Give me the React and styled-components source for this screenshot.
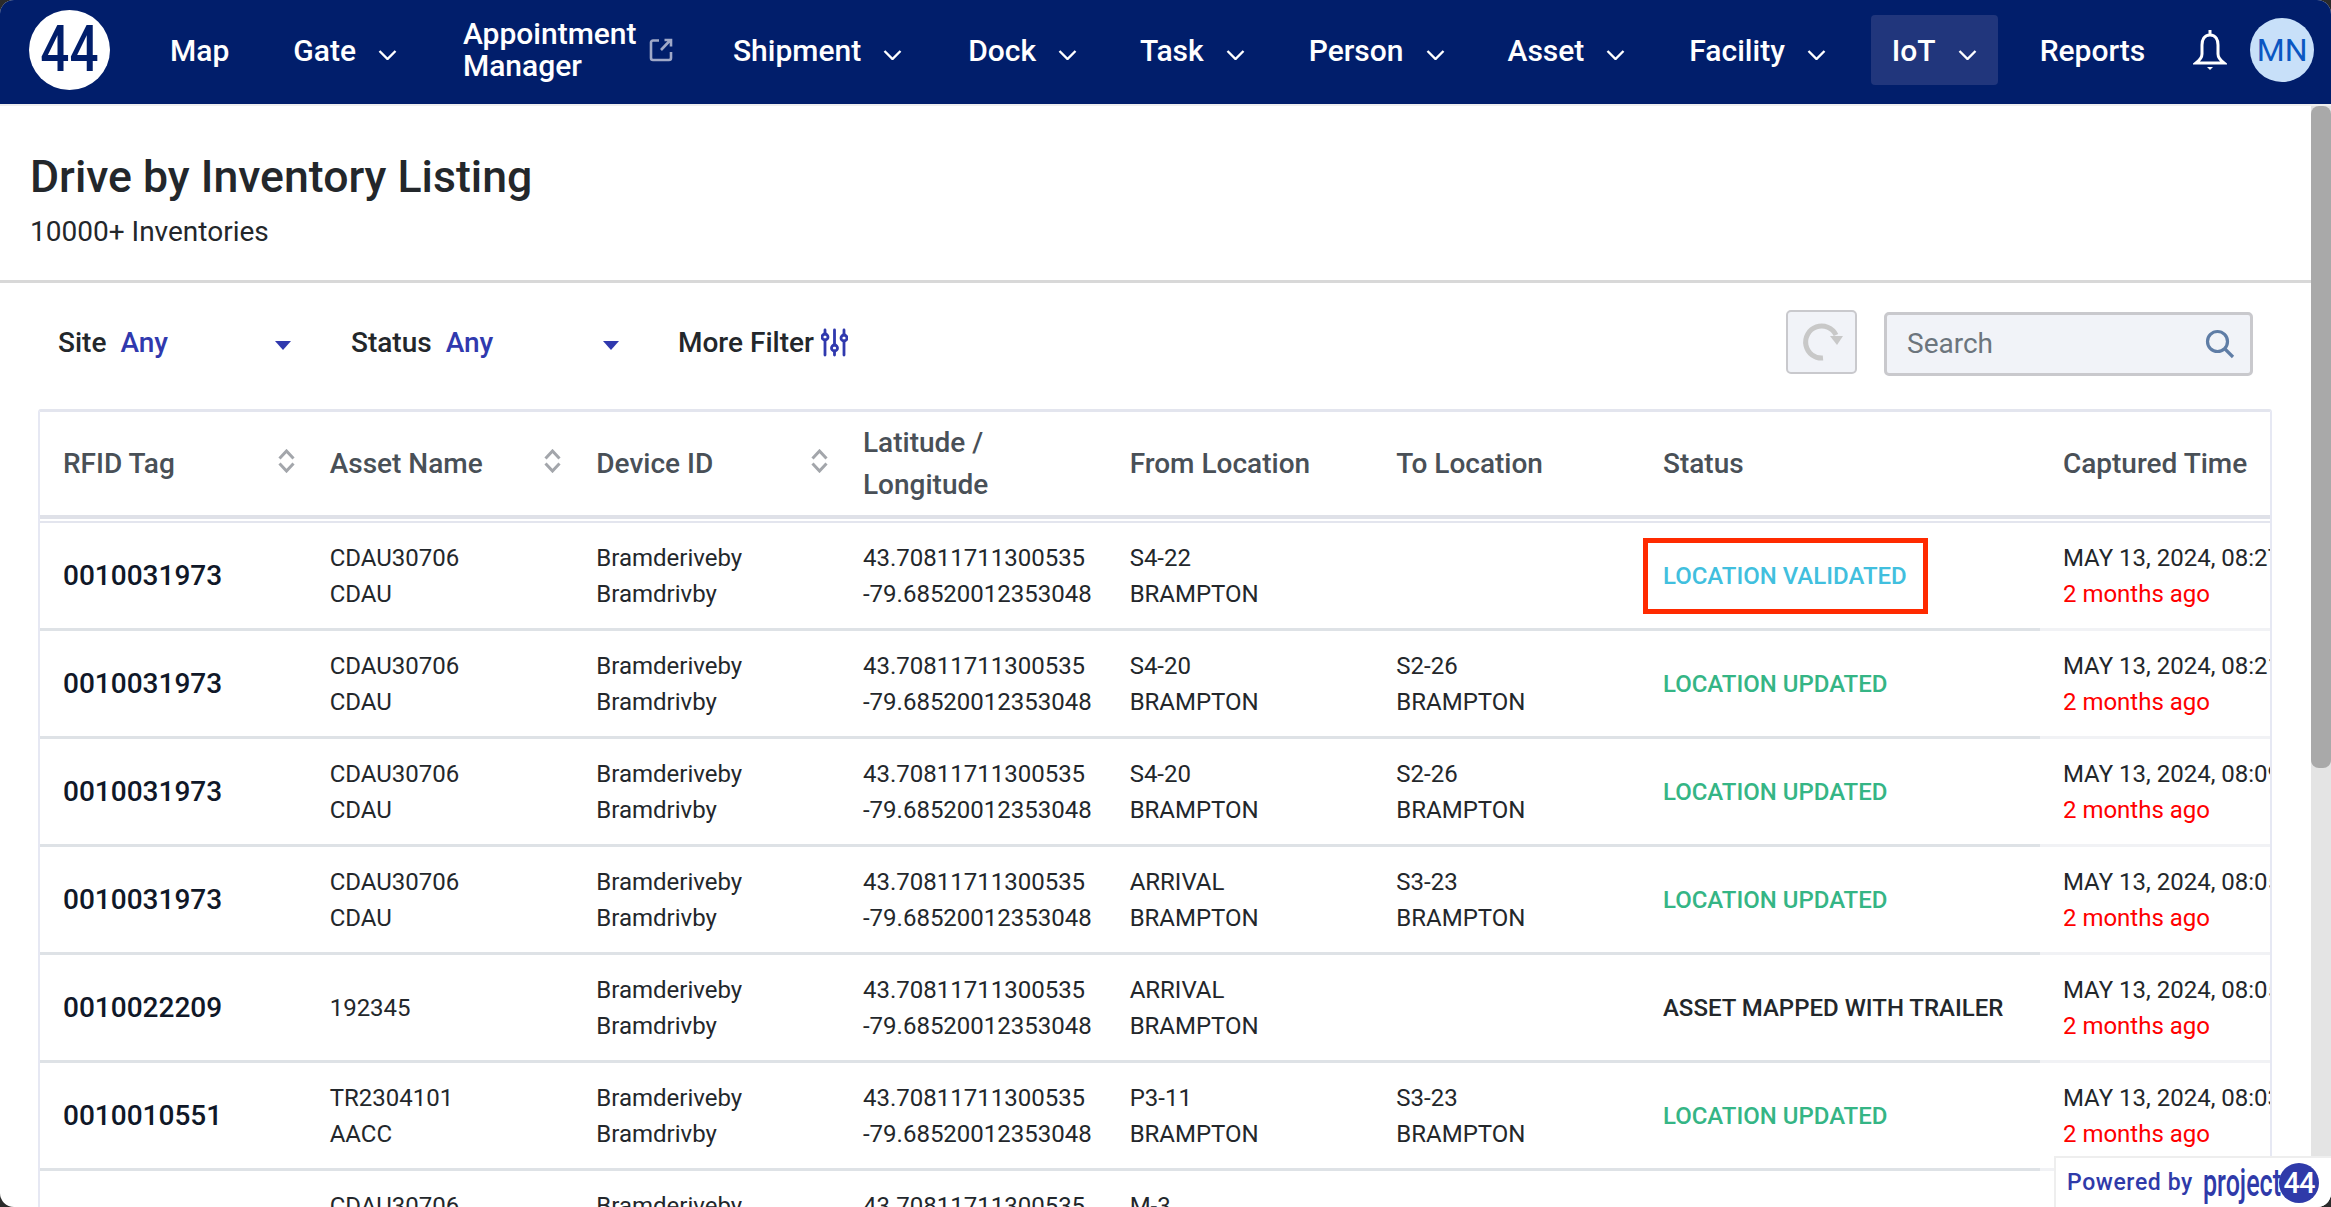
import React from 'react'
import styled, { createGlobalStyle } from 'styled-components'

const GlobalStyle = createGlobalStyle`
  html, body {
    margin: 0;
    height: 100%;
    overflow: hidden;
    background: #2b2b2b;
  }
  * { box-sizing: border-box; }
`

const Page = styled.div`
  width: 2331px;
  height: 1207px;
  overflow: hidden;
  position: relative;
  border-radius: 14px;
  background: #fff;
  display: flex;
  flex-direction: column;
  font-family: Roboto, "Liberation Sans", sans-serif;
  color: #212529;
`

const Navbar = styled.nav`
  height: 106px;
  flex: none;
  background: #011e6b;
  border-bottom: 2px solid #eeeeee;
  display: flex;
  align-items: center;
  padding: 0 15px 4px 29px;
`

const Logo = styled.div`
  width: 81px;
  height: 80px;
  border-radius: 50%;
  background: #fff;
  color: #011e6b;
  display: flex;
  align-items: center;
  justify-content: center;
  margin-right: 36px;
  flex: none;
`

const LogoDigits = styled.span`
  font-size: 64px;
  font-weight: 500;
  line-height: 1;
  transform: scaleX(0.8);
`

const NavItem = styled.div`
  display: flex;
  align-items: center;
  height: 70px;
  padding: 0 ${p => (p.$active ? 21 : 24)}px;
  margin-right: ${p => p.$gap ?? 18}px;
  border-radius: 4px;
  background: ${p => (p.$active ? '#21367c' : 'transparent')};
  color: #fff;
  font-size: 30px;
  font-weight: 500;
  white-space: nowrap;
  flex: none;
`

const NavChevron = styled.svg`
  width: 19px;
  height: 10px;
  margin-left: 22px;
  margin-top: 10px;
  fill: none;
  stroke: #fff;
  stroke-width: 2.4;
`

const TwoLineLabel = styled.span`
  line-height: 32px;
  white-space: normal;
  width: 174px;
`

const ExternalIcon = styled.svg`
  width: 24px;
  height: 24px;
  margin-left: 12px;
  fill: none;
  stroke: #a0a9c8;
  stroke-width: 2.6;
`

const BellIcon = styled.svg`
  width: 34px;
  height: 42px;
  margin: 0 23px 0 6px;
  flex: none;
  fill: none;
  stroke: #fff;
  stroke-width: 3;
`

const Avatar = styled.div`
  width: 64px;
  height: 64px;
  border-radius: 50%;
  background: #c8e0f9;
  color: #0b57c2;
  font-size: 32px;
  display: flex;
  align-items: center;
  justify-content: center;
  flex: none;
`

const Body = styled.div`
  flex: 1;
  min-height: 0;
  display: flex;
`

const Content = styled.main`
  flex: 1;
  min-width: 0;
`

const ScrollTrack = styled.div`
  width: 20px;
  flex: none;
  background: #e4e4e4;
`

const ScrollThumb = styled.div`
  height: 662px;
  background: #a9a9a9;
  border-radius: 8px;
`

const PageHead = styled.header`
  height: 177px;
  padding: 45px 30px 0;
  border-bottom: 3px solid #d8d8d8;
`

const Title = styled.h1`
  margin: 0;
  font-size: 44.6px;
  line-height: 52px;
  font-weight: 500;
  color: #23272b;
`

const Subtitle = styled.div`
  margin-top: 11px;
  font-size: 28px;
  line-height: 36px;
  color: #23272b;
`

const FilterBar = styled.div`
  height: 126px;
  padding: 0 58px 8px;
  display: flex;
  align-items: center;
`

const Filter = styled.div`
  display: flex;
  align-items: center;
  width: ${p => p.$width}px;
  margin-right: ${p => p.$gap}px;
  font-size: 28px;
  font-weight: 500;
  color: #23272b;
`

const FilterValue = styled.span`
  color: #3039ae;
  margin-left: 14px;
  flex: 1;
`

const Caret = styled.span`
  width: 0;
  height: 0;
  border-left: 8px solid transparent;
  border-right: 8px solid transparent;
  border-top: 9px solid #3039ae;
  margin-top: 6px;
`

const MoreFilter = styled.div`
  display: flex;
  align-items: center;
  gap: 7px;
  font-size: 28px;
  font-weight: 500;
  color: #23272b;
`

const SlidersIcon = styled.svg`
  width: 27px;
  height: 29px;
  fill: none;
  stroke: #3039ae;
  stroke-width: 2.8;
  stroke-linecap: round;
`

const Spacer = styled.div`
  flex: 1;
`

const RefreshButton = styled.div`
  width: 71px;
  height: 64px;
  border: 2px solid #c9c9cd;
  border-radius: 5px;
  background: #f1f3f8;
  display: flex;
  align-items: center;
  justify-content: center;
`

const RefreshIcon = styled.svg`
  width: 46px;
  height: 42px;
  fill: none;
  stroke: #c8c8c8;
  stroke-width: 5;
`

const SearchBox = styled.div`
  width: 369px;
  height: 64px;
  margin: 3px 0 0 27px;
  padding: 0 15px 0 20px;
  border: 3px solid #c9c9cd;
  border-radius: 5px;
  background: #f1f3f8;
  display: flex;
  align-items: center;
  justify-content: space-between;
  font-size: 28px;
  color: #6c757d;
`

const SearchIcon = styled.svg`
  width: 30px;
  height: 30px;
  fill: none;
  stroke: #5f7da6;
  stroke-width: 3.2;
`

const TableFrame = styled.div`
  margin-left: 38px;
  width: 2234px;
  border: 2px solid #e6e8f3;
  border-top: 3px solid #e3e5ee;
  border-radius: 3px;
  overflow: hidden;
`

const HeadRow = styled.div`
  display: grid;
  grid-template-columns: repeat(6, 266.67px) 400px 400px;
  height: 107px;
  width: 2400px;
  border-bottom: 4px solid #dfe1e8;
  margin-bottom: 2px;
`

const HeadCell = styled.div`
  display: flex;
  align-items: center;
  justify-content: space-between;
  padding: 0 23px;
  font-size: 28px;
  line-height: 42px;
  font-weight: 500;
  color: #495057;
`

const SortIcon = styled.svg`
  width: 19px;
  height: 24px;
  margin: -6px -12px 0 0;
  flex: none;
  fill: none;
  stroke: #a3a6ab;
  stroke-width: 3;
`

const Rows = styled.div`
  border-top: 2px solid #e3e5ee;
`

const Row = styled.div`
  display: grid;
  grid-template-columns: repeat(6, 266.67px) 400px 400px;
  height: 108px;
  width: 2400px;
`

const Cell = styled.div`
  display: flex;
  flex-direction: column;
  justify-content: center;
  padding: 0 23px;
  border-bottom: 3px solid ${p => (p.$last ? '#f1f2f5' : '#dee2e6')};
  font-size: 24px;
  line-height: 36px;
  color: #23272b;
  white-space: nowrap;
`

const TagCell = styled(Cell)`
  font-size: 28px;
  font-weight: 500;
  color: #101828;
`

const StatusLabel = styled.span`
  position: relative;
  align-self: flex-start;
  font-weight: 500;
  color: ${p => p.$color};
  &::after {
    content: ${p => (p.$marked ? "''" : 'none')};
    position: absolute;
    inset: -20px -21px -20px -20px;
    border: 5px solid #ff2a00;
  }
`

const Ago = styled.span`
  color: #ff0000;
`

const PoweredBy = styled.div`
  position: absolute;
  right: 0;
  bottom: 0;
  width: 277px;
  height: 51px;
  padding-left: 11px;
  background: #fff;
  border: 2px solid #eeeeee;
  border-right: none;
  border-bottom: none;
  display: flex;
  align-items: center;
  font-size: 23px;
  font-weight: 500;
  letter-spacing: 0.6px;
  color: #2f3aa9;
`

const BrandWord = styled.span`
  display: inline-block;
  margin-left: 10px;
  font-size: 38px;
  font-weight: 500;
  letter-spacing: 0;
  transform: scaleX(0.66);
  transform-origin: left center;
  width: 76px;
`

const BrandBadge = styled.span`
  width: 40px;
  height: 40px;
  border-radius: 50%;
  background: #2f3aa9;
  color: #fff;
  font-size: 29px;
  font-weight: 500;
  display: flex;
  align-items: center;
  justify-content: center;
  letter-spacing: -1px;
`

const navItems = [
  { label: 'Map', gap: 16 },
  { label: 'Gate', menu: true },
  { label: 'Appointment Manager', external: true, gap: 12 },
  { label: 'Shipment', menu: true },
  { label: 'Dock', menu: true, gap: 15 },
  { label: 'Task', menu: true, gap: 16 },
  { label: 'Person', menu: true, gap: 15 },
  { label: 'Asset', menu: true, gap: 16 },
  { label: 'Facility', menu: true, gap: 21 },
  { label: 'IoT', menu: true, active: true },
  { label: 'Reports' },
]

const columns = [
  { label: 'RFID Tag', sort: true },
  { label: 'Asset Name', sort: true },
  { label: 'Device ID', sort: true },
  { label: 'Latitude / Longitude' },
  { label: 'From Location' },
  { label: 'To Location' },
  { label: 'Status' },
  { label: 'Captured Time' },
]

const UPDATED = { text: 'LOCATION UPDATED', color: '#35b585' }

const rows = [
  { tag: '0010031973', asset: ['CDAU30706', 'CDAU'], from: 'S4-22', to: null, status: { text: 'LOCATION VALIDATED', color: '#41bfde', marked: true }, time: 'MAY 13, 2024, 08:27 AM' },
  { tag: '0010031973', asset: ['CDAU30706', 'CDAU'], from: 'S4-20', to: 'S2-26', status: UPDATED, time: 'MAY 13, 2024, 08:21 AM' },
  { tag: '0010031973', asset: ['CDAU30706', 'CDAU'], from: 'S4-20', to: 'S2-26', status: UPDATED, time: 'MAY 13, 2024, 08:09 AM' },
  { tag: '0010031973', asset: ['CDAU30706', 'CDAU'], from: 'ARRIVAL', to: 'S3-23', status: UPDATED, time: 'MAY 13, 2024, 08:05 AM' },
  { tag: '0010022209', asset: ['192345'], from: 'ARRIVAL', to: null, status: { text: 'ASSET MAPPED WITH TRAILER', color: '#23272b' }, time: 'MAY 13, 2024, 08:05 AM' },
  { tag: '0010010551', asset: ['TR2304101', 'AACC'], from: 'P3-11', to: 'S3-23', status: UPDATED, time: 'MAY 13, 2024, 08:03 AM' },
  { tag: '0010031973', asset: ['CDAU30706', 'CDAU'], from: 'M-3', to: null, status: UPDATED, time: 'MAY 13, 2024, 08:01 AM' },
]

const Chevron = () => (
  <NavChevron viewBox="0 0 19 10">
    <path d="M1.5 1 9.5 9 17.5 1" />
  </NavChevron>
)

const Sort = () => (
  <SortIcon viewBox="0 0 19 24">
    <path d="M2.5 9.500 9.500 2l7 7.500M2.500 14.500l7 7.500 7-7.500" />
  </SortIcon>
)

const App = () => (
  <Page>
    <GlobalStyle />
    <Navbar>
      <Logo><LogoDigits>44</LogoDigits></Logo>
      {navItems.map(item => (
        <NavItem key={item.label} $active={item.active} $gap={item.gap}>
          {item.external ? <TwoLineLabel>{item.label}</TwoLineLabel> : item.label}
          {item.external && (
            <ExternalIcon viewBox="0 0 24 24">
              <path d="M10 2.500H4A2 2 0 0 0 2 4.500V20a2 2 0 0 0 2 2h16a2 2 0 0 0 2-2v-6M12 12l9-9.500M15.500 2H22v6.500" />
            </ExternalIcon>
          )}
          {item.menu && <Chevron />}
        </NavItem>
      ))}
      <BellIcon viewBox="0 0 34 42">
        <path d="M17 1v5M17 6c-6 0-8 5-8 10v9c0 4-2 6-6 9h28c-4-3-6-5-6-9v-9c0-5-2-10-8-10z" />
        <path d="M14 38h6l-3 3z" fill="#fff" stroke="none" />
      </BellIcon>
      <Avatar>MN</Avatar>
    </Navbar>
    <Body>
      <Content>
        <PageHead>
          <Title>Drive by Inventory Listing</Title>
          <Subtitle>10000+ Inventories</Subtitle>
        </PageHead>
        <FilterBar>
          <Filter $width={233} $gap={60}>Site<FilterValue>Any</FilterValue><Caret /></Filter>
          <Filter $width={268} $gap={59}>Status<FilterValue>Any</FilterValue><Caret /></Filter>
          <MoreFilter>
            More Filter
            <SlidersIcon viewBox="0 0 27 29">
              <path d="M4 2v4M4 12v15M13.500 2v15M13.500 23v4M23 2v5M23 13v14" />
              <circle cx="4" cy="9" r="3" />
              <circle cx="13.500" cy="20" r="3" />
              <circle cx="23" cy="10" r="3" />
            </SlidersIcon>
          </MoreFilter>
          <Spacer />
          <RefreshButton>
            <RefreshIcon viewBox="0 0 46 42">
              <path d="M24 37A16 16 0 1 1 37 14" />
              <path d="M31 15h13l-6 9z" fill="#c8c8c8" stroke="none" />
            </RefreshIcon>
          </RefreshButton>
          <SearchBox>
            Search
            <SearchIcon viewBox="0 0 30 30">
              <circle cx="12.500" cy="12.500" r="10" />
              <path d="m20 20 8 8" />
            </SearchIcon>
          </SearchBox>
        </FilterBar>
        <TableFrame>
          <HeadRow>
            {columns.map(col => (
              <HeadCell key={col.label}>
                <span>{col.label}</span>
                {col.sort && <Sort />}
              </HeadCell>
            ))}
          </HeadRow>
          <Rows>
            {rows.map((row, i) => (
              <Row key={i}>
                <TagCell>{row.tag}</TagCell>
                <Cell>{row.asset.map(line => <span key={line}>{line}</span>)}</Cell>
                <Cell><span>Bramderiveby</span><span>Bramdrivby</span></Cell>
                <Cell><span>43.70811711300535</span><span>-79.68520012353048</span></Cell>
                <Cell><span>{row.from}</span><span>BRAMPTON</span></Cell>
                <Cell>
                  {row.to && <span>{row.to}</span>}
                  {row.to && <span>BRAMPTON</span>}
                </Cell>
                <Cell>
                  <StatusLabel $color={row.status.color} $marked={row.status.marked}>{row.status.text}</StatusLabel>
                </Cell>
                <Cell $last><span>{row.time}</span><Ago>2 months ago</Ago></Cell>
              </Row>
            ))}
          </Rows>
        </TableFrame>
      </Content>
      <ScrollTrack><ScrollThumb /></ScrollTrack>
    </Body>
    <PoweredBy>
      Powered by
      <BrandWord>project</BrandWord>
      <BrandBadge>44</BrandBadge>
    </PoweredBy>
  </Page>
)

export default App
